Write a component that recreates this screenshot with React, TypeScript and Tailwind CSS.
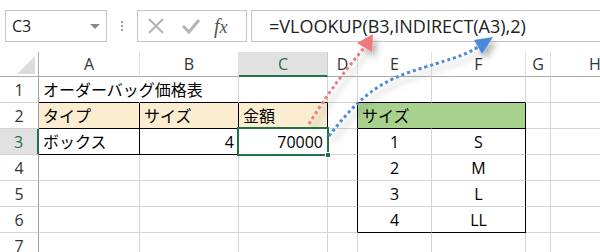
import React from 'react';

type B = 'g' | 'k' | 'n' | 'h';
type CellSpec = {
  t?: string;
  a?: 'l' | 'r' | 'c';
  bg?: 'o' | 'gr';
  r?: B;
  b?: B;
  sel?: boolean;
};

const rCls: Record<B, string> = {
  g: 'border-r-[#d4d4d4]',
  k: 'border-r-black',
  n: 'border-r-transparent',
  h: 'border-r-[#a9d18e]',
};
const bCls: Record<B, string> = {
  g: 'border-b-[#d4d4d4]',
  k: 'border-b-black',
  n: 'border-b-transparent',
  h: 'border-b-[#a9d18e]',
};
const aCls = { l: 'justify-start', r: 'justify-end', c: 'justify-center' };
const bgCls = { o: 'bg-[#fcecd0]', gr: 'bg-[#a9d18e]' };

const E: CellSpec = {};

const rows: CellSpec[][] = [
  // row 1
  [
    { t: 'オーダーバッグ価格表', r: 'n', b: 'k' },
    { b: 'k' },
    { b: 'k' },
    {},
    { b: 'k' },
    { b: 'k' },
    {},
    {},
  ],
  // row 2
  [
    { t: 'タイプ', bg: 'o', r: 'k', b: 'k' },
    { t: 'サイズ', bg: 'o', r: 'k', b: 'k' },
    { t: '金額', bg: 'o', r: 'k', b: 'k' },
    { r: 'k' },
    { t: 'サイズ', bg: 'gr', r: 'h', b: 'k' },
    { bg: 'gr', r: 'k', b: 'k' },
    {},
    {},
  ],
  // row 3
  [
    { t: 'ボックス', r: 'k', b: 'k' },
    { t: '4', a: 'r', r: 'k', b: 'k' },
    { t: '70000', a: 'r', r: 'k', b: 'k', sel: true },
    { r: 'k' },
    { t: '1', a: 'c' },
    { t: 'S', a: 'c', r: 'k' },
    {},
    {},
  ],
  [E, E, E, { r: 'k' }, { t: '2', a: 'c' }, { t: 'M', a: 'c', r: 'k' }, E, E],
  [E, E, E, { r: 'k' }, { t: '3', a: 'c' }, { t: 'L', a: 'c', r: 'k' }, E, E],
  [E, E, E, { r: 'k' }, { t: '4', a: 'c', b: 'k' }, { t: 'LL', a: 'c', r: 'k', b: 'k' }, E, E],
  [E, E, E, E, E, E, E, E],
];

const cols = ['A', 'B', 'C', 'D', 'E', 'F', 'G', 'H'];

const font = { fontFamily: '"Open Sans", "Noto Sans CJK JP", sans-serif' };

function Cell({ c, last }: { c: CellSpec; last?: boolean }) {
  return (
    <div
      className={`relative flex items-center whitespace-nowrap px-[4px] pt-[1px] text-[16px] leading-none text-black border-r border-b ${
        last ? 'border-r-transparent' : rCls[c.r ?? 'g']
      } ${bCls[c.b ?? 'g']} ${aCls[c.a ?? 'l']} ${c.bg ? bgCls[c.bg] : ''} ${
        c.t && c.r === 'n' ? 'z-10 overflow-visible' : 'overflow-hidden'
      } ${c.sel ? 'overflow-visible z-20' : ''}`}
    >
      {c.t}
      {c.sel && (
        <div className="absolute left-[-2px] top-[-2px] right-[-2px] bottom-[-2px] z-20 border-2 border-[#217346]">
          <div className="absolute right-[-4px] bottom-[-4px] w-[6px] h-[6px] bg-[#217346] border border-white" />
        </div>
      )}
    </div>
  );
}

export default function App() {
  return (
    <div className="relative w-[600px] h-[252px] overflow-hidden bg-white" style={font}>
      {/* toolbar */}
      <div className="flex h-[52px] items-start pt-[10px] pl-[5px]">
        <div className="flex h-[32px] w-[102px] items-center justify-between border border-[#c6c6c6] pl-[6px] pr-[6px]">
          <span className="text-[16px] text-[#222]">C3</span>
          <span className="h-0 w-0 border-x-[5px] border-t-[5px] border-x-transparent border-t-[#8a8a8a]" />
        </div>
        <div className="flex h-[32px] w-[30px] flex-col items-center justify-center gap-[2px]">
          <span className="h-[2px] w-[2px] bg-[#a0a0a0]" />
          <span className="h-[2px] w-[2px] bg-[#a0a0a0]" />
          <span className="h-[2px] w-[2px] bg-[#a0a0a0]" />
        </div>
        <div className="flex h-[32px] w-[110px] items-center border border-[#c6c6c6] pl-[9px]">
          <svg width="18" height="18" viewBox="0 0 18 18" className="mr-[16px]">
            <path d="M2 2 L16 16 M16 2 L2 16" stroke="#b3b3b3" strokeWidth="2" />
          </svg>
          <svg width="20" height="18" viewBox="0 0 20 18" className="mr-[13px]">
            <path d="M2 9 L8 15 L18 3" stroke="#b3b3b3" strokeWidth="3" fill="none" />
          </svg>
          <span
            className="text-[20px] italic leading-none text-[#555]"
            style={{ fontFamily: '"Liberation Serif", serif' }}
          >
            <span className="font-normal">f</span>
            <span className="text-[18px]">x</span>
          </span>
        </div>
        <div className="ml-[4px] flex h-[32px] flex-1 items-center border-y border-l border-[#c6c6c6] pl-[17px]">
          <span className="text-[18px] text-[#222]">=VLOOKUP(B3,INDIRECT(A3),2)</span>
        </div>
      </div>

      {/* sheet */}
      <div className="grid w-[640px] grid-cols-[39px_101px_99px_89px_30px_74px_94px_25px_89px] grid-rows-[25px_26px_26px_26px_26px_26px_26px_26px]">
        {/* corner */}
        <div className="relative border-r border-b border-r-[#ababab] border-b-[#ababab]">
          <svg className="absolute right-[3px] bottom-[2px]" width="18" height="18" viewBox="0 0 18 18">
            <polygon points="18,0 18,18 0,18" fill="#dcdcdc" />
          </svg>
        </div>
        {cols.map((c) => (
          <div
            key={c}
            className={`flex items-center justify-center text-[16px] leading-none ${
              c === 'C'
                ? 'bg-[#e1e1e1] text-[#217346] border-b-2 border-b-[#217346] border-r border-r-[#c8c8c8]'
                : 'text-[#333] border-b border-b-[#ababab] border-r border-r-[#e0e0e0]'
            }`}
          >
            {c}
          </div>
        ))}
        {rows.map((row, ri) => (
          <React.Fragment key={ri}>
            <div
              className={`flex items-center justify-center text-[16px] leading-none border-b border-b-[#d4d4d4] ${
                ri === 2
                  ? 'bg-[#e1e1e1] text-[#217346] border-r-2 border-r-[#217346]'
                  : 'text-[#333] border-r border-r-[#9e9e9e]'
              }`}
            >
              {ri + 1}
            </div>
            {row.map((c, ci) => (
              <Cell key={ci} c={c} />
            ))}
          </React.Fragment>
        ))}
      </div>

      {/* arrows */}
      <svg className="pointer-events-none absolute left-0 top-0 z-30" width="600" height="252" viewBox="0 0 600 252">
        <defs>
          <filter id="sh" x="-50%" y="-50%" width="200%" height="200%">
            <feDropShadow dx="4" dy="5" stdDeviation="3" floodColor="#000" floodOpacity="0.3" />
          </filter>
        </defs>
        <g filter="url(#sh)">
          <path d="M309 124 Q332 86 364 48" stroke="#ef7a7d" strokeWidth="3" strokeDasharray="3 3" fill="none" />
          <polygon points="373,34 357,43 372,52" fill="#ef7a7d" />
          <path
            d="M329 136 C348 112 368 86 410 72 S460 58 478 47"
            stroke="#4a8bd8"
            strokeWidth="3"
            strokeDasharray="3 3"
            fill="none"
          />
          <polygon points="493,37 474,40 482,54" fill="#4a8bd8" />
        </g>
      </svg>
    </div>
  );
}
